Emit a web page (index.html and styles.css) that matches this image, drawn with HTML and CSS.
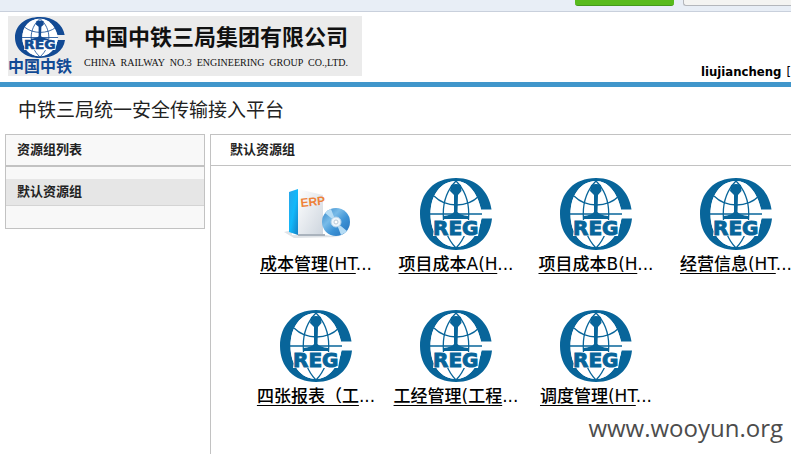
FILE: index.html
```html
<!DOCTYPE html>
<html lang="zh-CN">
<head>
<meta charset="utf-8">
<title>中铁三局统一安全传输接入平台</title>
<link rel="stylesheet" href="styles.css">
</head>
<body>
<svg class="defs" aria-hidden="true">
  <defs>
    <symbol id="emblem" viewBox="0 0 72 72">
      <path fill="currentColor" fill-rule="evenodd" d="M36 0C56 0 69 13 71.500 31.500H61C57 14 48 3 36 3C21 3 10.500 17 10.500 36C10.500 55 21 69 36 69C48 69 58 58 61.500 40.500H72C70 60 56 72 36 72C14 72 0 57 0 36C0 15 14 0 36 0Z"/>
      <path class="globe" d="M36 3C21 3 10.500 17 10.500 36C10.500 55 21 69 36 69C48 69 58 58 61.500 40.500V36L61 31.500C57 14 48 3 36 3Z"/>
      <g fill="none" stroke="currentColor" stroke-width="1.300">
        <path d="M36 3C19 20 19 52 36 70M36 3C53 20 53 52 36 70"/>
        <path d="M14 18C26 30 47 30 59 18M10 36H62"/>
      </g>
      <path fill="currentColor" d="M31 7Q36 5 41 7L41.500 13L38 17L37.500 34Q40 37 48 38V41H23V38Q32 37 34 34L34 17L30 13Z"/>
      <path class="globe" d="M15 42H61L58 58H13Z"/>
      <text class="initials" x="13" y="57">REG</text>
    </symbol>
    <linearGradient id="spine" x1="0" y1="0" x2="1" y2="1"><stop offset="0" stop-color="#2aa5e8"/><stop offset=".5" stop-color="#12b8fa"/><stop offset="1" stop-color="#1680c4"/></linearGradient>
    <linearGradient id="face" x1="0" y1="0" x2="1" y2="1"><stop offset="0" stop-color="#fff"/><stop offset="1" stop-color="#cdd5de"/></linearGradient>
    <linearGradient id="disc" x1="0" y1="0" x2="1" y2="1"><stop offset="0" stop-color="#3284c8"/><stop offset=".35" stop-color="#78bbe8"/><stop offset=".6" stop-color="#3d93d6"/><stop offset="1" stop-color="#2670b8"/></linearGradient>
  </defs>
</svg>

<div class="toolbar">
  <button class="tool tool-go" type="button"></button>
  <button class="tool tool-plain" type="button"></button>
</div>

<header class="header">
  <div class="banner">
    <div class="brand">
      <svg class="brand-mark" viewBox="0 0 72 72" preserveAspectRatio="none" aria-hidden="true"><use href="#emblem"/></svg>
      <span class="brand-name">中国中铁</span>
    </div>
    <div class="company">
      <span class="company-zh">中国中铁三局集团有限公司</span>
      <span class="company-en"><span>CHINA</span> <span>RAILWAY</span> <span>NO.3</span> <span>ENGINEERING</span> <span>GROUP</span> <span>CO.,LTD.</span></span>
    </div>
  </div>
  <div class="user"><b>liujiancheng</b><span>[</span></div>
</header>

<h1 class="title">中铁三局统一安全传输接入平台</h1>

<div class="layout">
  <nav class="sidebar">
    <h2 class="side-heading">资源组列表</h2>
    <a class="side-item" href="#group">默认资源组</a>
  </nav>
  <main class="content" id="group">
    <h2 class="content-heading">默认资源组</h2>
    <div class="grid">
      <div class="item">
        <svg class="icon" viewBox="0 0 72 72" aria-hidden="true">
          <path fill="#dfe3e7" d="M4 54L12 52V57H46L60 59L14 60Z"/>
          <path fill="url(#spine)" d="M9 14L18 11V57L9 54Z"/>
          <path fill="url(#face)" d="M18 11L43 17V57H18Z"/>
          <path fill="#aab3bd" d="M18 56H45V58H18Z"/>
          <text class="erp" x="21" y="29" transform="rotate(-6 21 29)">ERP</text>
          <circle cx="56" cy="44" r="14" fill="url(#disc)"/>
          <path fill="#b5dcf5" d="M56 44L45 35A14 14 0 0 1 51 31ZM56 44L67 53A14 14 0 0 1 61 57Z"/>
          <circle cx="56" cy="44" r="5" fill="#edf5fb" stroke="#b3d1e8"/>
          <circle cx="56" cy="44" r="2" fill="#fff" stroke="#bccbd8"/>
        </svg>
        <div class="label"><a href="#r1">成本管理(HT</a>...</div>
      </div>
      <div class="item"><svg class="icon" aria-hidden="true"><use href="#emblem"/></svg><div class="label"><a href="#r2">项目成本A(H</a>...</div></div>
      <div class="item"><svg class="icon" aria-hidden="true"><use href="#emblem"/></svg><div class="label"><a href="#r3">项目成本B(H</a>...</div></div>
      <div class="item"><svg class="icon" aria-hidden="true"><use href="#emblem"/></svg><div class="label"><a href="#r4">经营信息(HT</a>...</div></div>
      <div class="item"><svg class="icon" aria-hidden="true"><use href="#emblem"/></svg><div class="label"><a href="#r5">四张报表（工</a>...</div></div>
      <div class="item"><svg class="icon" aria-hidden="true"><use href="#emblem"/></svg><div class="label"><a href="#r6">工经管理(工程</a>...</div></div>
      <div class="item"><svg class="icon" aria-hidden="true"><use href="#emblem"/></svg><div class="label"><a href="#r7">调度管理(HT</a>...</div></div>
    </div>
  </main>
</div>
<div class="watermark">www.wooyun.org</div>
</body>
</html>
```
FILE: styles.css
```css
* { box-sizing: border-box; }

body {
  margin: 0;
  min-height: 100vh;
  display: flex;
  flex-direction: column;
  position: relative;
  overflow: hidden;
  background: #fff;
  color: #222;
  font-family: "DejaVu Sans", "Noto Sans CJK SC", sans-serif;
}

.defs { position: absolute; width: 0; height: 0; }

.toolbar {
  display: flex;
  justify-content: flex-end;
  align-items: flex-start;
  gap: 9px;
  height: 12px;
  background: #e8eef6;
  border-bottom: 1px solid #c9d0dc;
}
.tool { height: 6px; padding: 0; border: 0; }
.tool-go {
  width: 99px;
  background: #58bb1c;
  border-bottom: 1px solid #43991a;
  border-radius: 0 0 3px 3px;
}
.tool-plain {
  width: 108px;
  background: #f4f4f2;
  border: solid #b4b7bc;
  border-width: 0 0 1px 1px;
  border-radius: 0 0 0 3px;
}

.header {
  display: flex;
  justify-content: space-between;
  align-items: flex-end;
  padding-left: 8px;
  border-bottom: 5px solid #4096cb;
}
.banner {
  display: flex;
  gap: 12px;
  height: 60px;
  margin: 4px 0 6px;
  padding-right: 14px;
  background: #ebebeb;
}
.brand {
  display: flex;
  flex-direction: column;
  align-items: center;
  color: #124a94;
}
.brand-mark { width: 50px; height: 41px; margin-top: 1px; }
.brand-name { font-size: 16px; line-height: 18px; font-weight: 700; }
.company {
  display: flex;
  flex-direction: column;
  color: #111;
  padding-top: 8px;
}
.company-zh { font-size: 22px; line-height: 28px; font-weight: 700; }
.company-en {
  display: flex;
  justify-content: space-between;
  font-family: "Liberation Serif", serif;
  font-size: 10px;
  line-height: 22px;
}
.user {
  display: flex;
  gap: 5px;
  font-family: "DejaVu Sans Condensed", "DejaVu Sans", sans-serif;
  font-size: 13px;
  line-height: 20px;
  color: #000;
  white-space: nowrap;
}

.title {
  margin: 0;
  padding-left: 18px;
  font-size: 19px;
  line-height: 47px;
  font-weight: 400;
}

.layout { display: flex; flex: 1; align-items: stretch; gap: 5px; padding-left: 5px; }

.sidebar {
  flex: 0 0 200px;
  align-self: flex-start;
  padding-bottom: 22px;
  background: #f8f8f8;
  border: 1px solid #c2c2c2;
}
.side-heading, .content-heading {
  margin: 0;
  font-size: 13px;
  line-height: 30px;
  font-weight: 700;
}
.side-heading { padding-left: 11px; border-bottom: 2px solid #c2c2c2; }
.side-item {
  display: block;
  margin-top: 12px;
  padding-left: 11px;
  font-size: 13px;
  line-height: 26px;
  font-weight: 700;
  color: inherit;
  text-decoration: none;
  background: #e6e6e6;
  border-bottom: 1px solid #d4d4d4;
}

.content {
  flex: 1;
  min-width: 0;
  overflow: hidden;
  border: solid #c2c2c2;
  border-width: 1px 0 0 1px;
}
.content-heading { padding-left: 19px; border-bottom: 1px solid #c2c2c2; }
.grid {
  display: grid;
  grid-template-columns: repeat(4, 140px);
  row-gap: 32px;
  padding: 12px 0 0 35px;
}
.item { display: flex; flex-direction: column; align-items: center; }
.icon { display: block; width: 72px; height: 72px; color: #08659a; }
.label {
  height: 28px;
  font-size: 17px;
  line-height: 28px;
  font-weight: 500;
  color: #000;
  white-space: nowrap;
}
.label a { color: inherit; text-underline-offset: 3px; }

.globe { fill: #fff; }
.initials {
  font: bold 20px "DejaVu Sans", sans-serif;
  fill: currentColor;
  stroke: currentColor;
  stroke-width: 1px;
}
.erp { font: bold 12px "Liberation Sans", sans-serif; fill: #ee8239; }

.watermark {
  position: absolute;
  right: 8px;
  bottom: 8px;
  font-family: "Open Sans", sans-serif;
  font-size: 24px;
  line-height: 36px;
  color: #4c4c4c;
}
```
